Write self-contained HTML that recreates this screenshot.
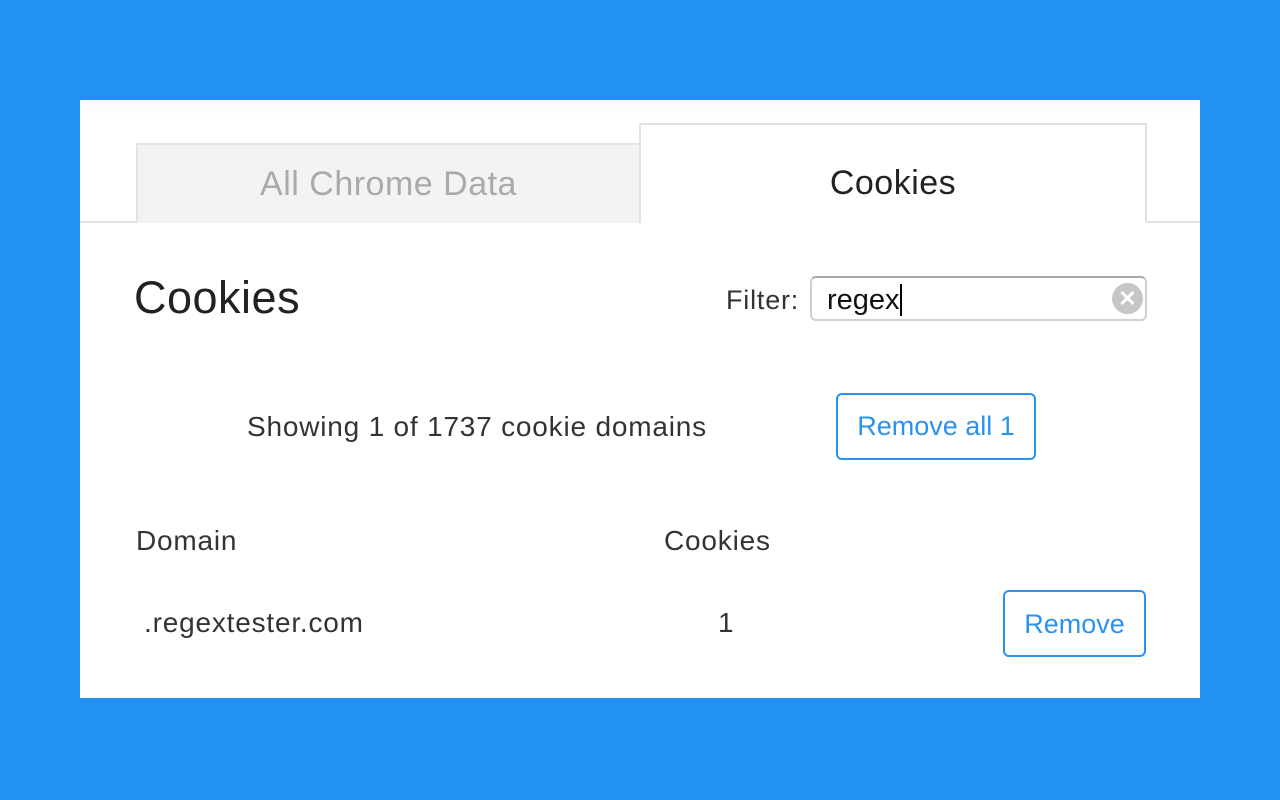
<!DOCTYPE html>
<html><head><style>
body{margin:0;width:1280px;height:800px;background:#2391f2;position:relative;font-family:"Liberation Sans",sans-serif;overflow:hidden}
.card{position:absolute;left:80px;top:100px;width:1120px;height:598px;background:#fff}
.abs{position:absolute;white-space:nowrap}
.hdr{left:0;top:0;width:1120px;height:122px;background:linear-gradient(#fafafa,#fff 20px)}
.line{left:0;top:121px;width:1120px;height:2px;background:#e3e3e3}
.tab1{left:56px;top:43px;width:501px;height:78px;background:#f3f3f3;border:2px solid #e3e3e3;border-bottom:none;color:#aaa;font-size:34px;letter-spacing:0.5px;text-align:center;line-height:78px}
.tab2{left:559px;top:23px;width:504px;height:98px;background:#fff;border:2px solid #e3e3e3;border-bottom:none;color:#222;font-size:34px;letter-spacing:0.5px;text-align:center;line-height:116px}
.t{color:#333;font-size:28px;letter-spacing:0.8px}
.btn{border:2px solid #2b93ee;border-radius:6px;color:#2b93ee;font-size:27px;text-align:center;box-sizing:border-box}
</style></head><body>
<div class="card">
<div class="abs hdr"></div>
<div class="abs line"></div>
<div class="abs tab1">All Chrome Data</div>
<div class="abs tab2">Cookies</div>
<div class="abs t" style="left:54px;top:172px;font-size:45px;color:#222;letter-spacing:0.5px">Cookies</div>
<div class="abs t" style="left:646px;top:185px;font-size:27px">Filter:</div>
<div class="abs" style="left:730px;top:176px;width:337px;height:45px;box-sizing:border-box;border:2px solid #d0d0d0;border-top-color:#aaa;border-radius:6px;"></div>
<div class="abs" style="left:747px;top:184px;font-size:29px;color:#111">regex<span style="display:inline-block;width:2px;height:32px;background:#000;vertical-align:-7px"></span></div>
<div class="abs" style="left:1032px;top:183px;width:31px;height:31px;border-radius:50%;background:#c6c6c6;color:#fff;font-size:22px;font-weight:bold;text-align:center;line-height:31px">✕</div>
<div class="abs t" style="left:167px;top:311px">Showing 1 of 1737 cookie domains</div>
<div class="abs btn" style="left:756px;top:293px;width:200px;height:67px;line-height:63px">Remove all 1</div>
<div class="abs t" style="left:56px;top:425px">Domain</div>
<div class="abs t" style="left:584px;top:425px">Cookies</div>
<div class="abs t" style="left:64px;top:507px">.regextester.com</div>
<div class="abs t" style="left:638px;top:507px">1</div>
<div class="abs btn" style="left:923px;top:490px;width:143px;height:67px;line-height:65px">Remove</div>
</div>
</body></html>
